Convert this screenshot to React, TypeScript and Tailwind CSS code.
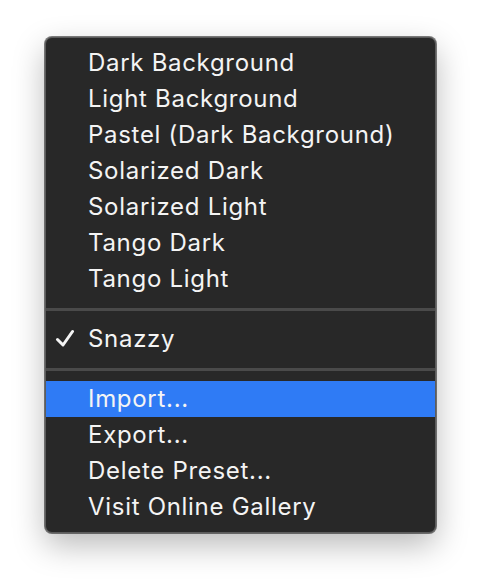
import React from 'react';

const presets = [
  'Dark Background',
  'Light Background',
  'Pastel (Dark Background)',
  'Solarized Dark',
  'Solarized Light',
  'Tango Dark',
  'Tango Light',
];

const actions = ['Import...', 'Export...', 'Delete Preset...', 'Visit Online Gallery'];

function Check() {
  return (
    <svg width="20" height="18" viewBox="0 0 20 18" className="absolute left-[9px] top-[8px]">
      <path d="M2.5 10.5 L8 16 L17.5 2.5" fill="none" stroke="#f4f4f4" strokeWidth="3" strokeLinecap="round" strokeLinejoin="round" />
    </svg>
  );
}

function Item({ label, checked, active }: { label: string; checked?: boolean; active?: boolean }) {
  return (
    <div className={`relative flex h-[36px] items-center pl-[42px] ${active ? 'bg-[#2f7bf5]' : ''}`}>
      {checked && <Check />}
      <span className="text-[24px] leading-none tracking-[0.7px] text-[#f4f4f4]">{label}</span>
    </div>
  );
}

function Separator() {
  return (
    <div className="flex h-[24px] items-center">
      <div className="h-[3px] w-full bg-[#4a4a4a]" />
    </div>
  );
}

export default function App() {
  return (
    <div className="min-h-[588px] w-[482px] bg-white pl-[45px] pt-[37px]" style={{ fontFamily: 'Inter, "Liberation Sans", sans-serif' }}>
      <div className="w-[391px] overflow-hidden rounded-[7px] border border-[#5c5c5c] bg-[#282828] py-[7px] shadow-[0_12px_32px_rgba(0,0,0,0.28),0_0_0_1px_rgba(0,0,0,0.5)]">
        {presets.map((p) => (
          <Item key={p} label={p} />
        ))}
        <Separator />
        <Item label="Snazzy" checked />
        <Separator />
        {actions.map((a, i) => (
          <Item key={a} label={a} active={i === 0} />
        ))}
      </div>
    </div>
  );
}
